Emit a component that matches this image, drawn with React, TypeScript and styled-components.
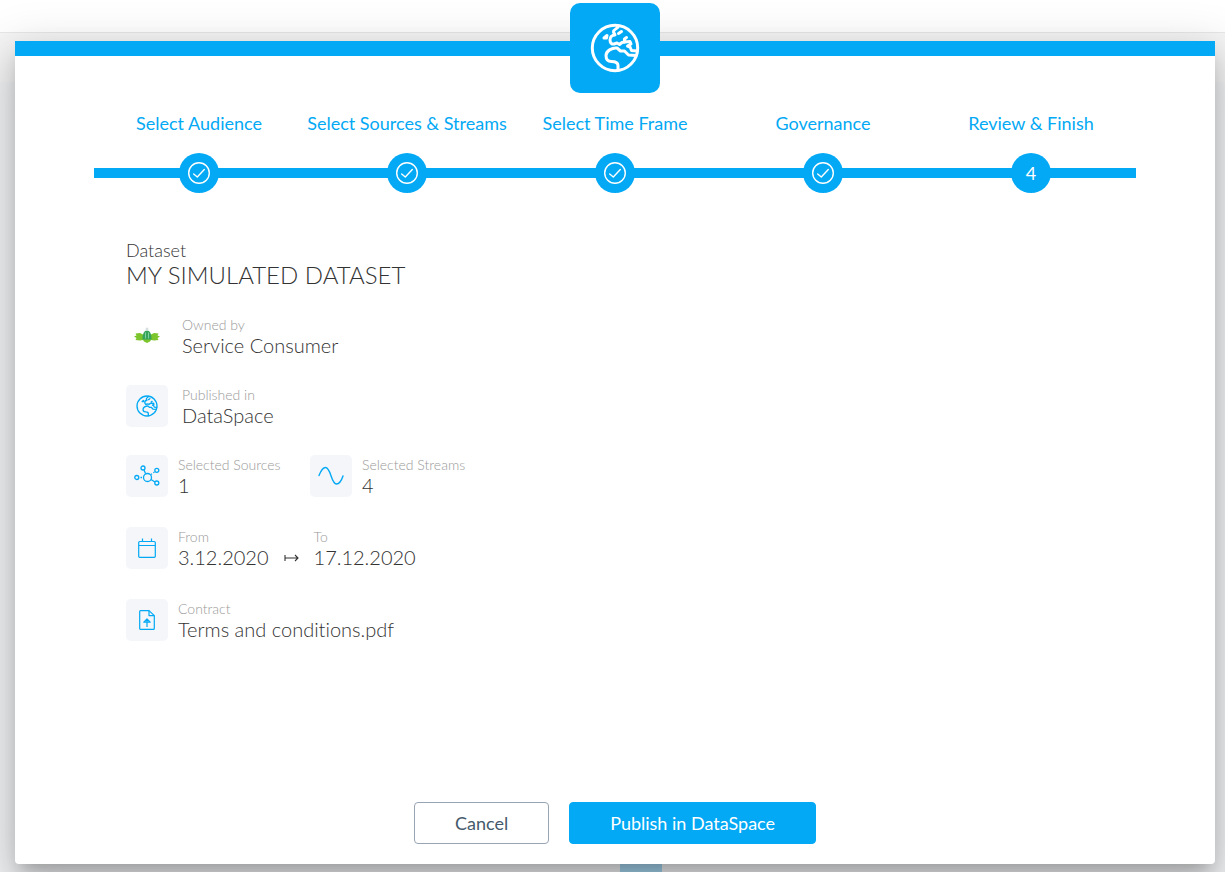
import React from "react";
import styled, { createGlobalStyle, css } from "styled-components";

const BLUE = "#03a9f4";

const GlobalStyle = createGlobalStyle`
  * { box-sizing: border-box; }
  html, body, #root { height: 100%; }
  body {
    margin: 0;
    background: #f2f4f6;
    color: #333333;
    font-family: Lato, "Liberation Sans", sans-serif;
    font-variant-ligatures: none;
  }
`;

const Page = styled.div`
  position: relative;
  min-height: 100%;
  overflow: hidden;
`;

const Backdrop = styled.div`
  position: absolute;
  inset: 0;
  display: flex;
  flex-direction: column;
`;

const PageHeader = styled.div`
  height: 33px;
  background: #ffffff;
  border-bottom: 1px solid #e8e8e8;
`;

const PageToolbar = styled.div`
  flex: 1;
  max-height: 49px;
  background: #f6f6f6;
`;

const PageTile = styled.div`
  width: 42px;
  height: 42px;
  margin: auto 0 0 620px;
  background: #a5d5f0;
`;

const DialogArea = styled.div`
  position: relative;
  min-height: 100vh;
  display: flex;
  padding: 41px 10px 8px 15px;
`;

const Dialog = styled.section`
  position: relative;
  flex: 1;
  display: flex;
  flex-direction: column;
  padding: 55px 79px 20px;
  border-top: 15px solid ${BLUE};
  border-radius: 0 0 4px 4px;
  background: #ffffff;
  box-shadow:
    0 11px 15px -7px rgba(0, 0, 0, 0.2),
    0 24px 38px 3px rgba(0, 0, 0, 0.14),
    0 9px 46px 8px rgba(0, 0, 0, 0.12);
`;

const Emblem = styled.div`
  position: absolute;
  top: -53px;
  left: 50%;
  transform: translateX(-50%);
  width: 90px;
  height: 90px;
  display: grid;
  place-items: center;
  border-radius: 10px;
  background: ${BLUE};
  color: #ffffff;
`;

const Steps = styled.ol`
  display: grid;
  grid-template-columns: repeat(5, 1fr);
  margin: 0;
  padding: 0 1px;
  list-style: none;
  background: linear-gradient(${BLUE}, ${BLUE}) 0 calc(100% - 15px) / 100% 10px no-repeat;
`;

const Step = styled.li`
  display: flex;
  flex-direction: column;
  align-items: center;
  gap: 18px;
  color: ${BLUE};
  font-size: 18px;
  line-height: 24px;
  white-space: nowrap;
`;

const StepDot = styled.span`
  width: 40px;
  height: 40px;
  display: grid;
  place-items: center;
  border-radius: 50%;
  background: ${BLUE};
  color: #ffffff;
`;

const Summary = styled.div`
  display: flex;
  flex-direction: column;
  gap: 28px;
  padding: 45px 32px 0;
`;

const Heading = styled.header`
  display: flex;
  flex-direction: column;
  font-weight: 300;
`;

const Kicker = styled.span`
  font-size: 18px;
  line-height: 24px;
`;

const Title = styled.h1`
  margin: 0;
  font-size: 24px;
  font-weight: 300;
  line-height: 25px;
`;

const Group = styled.div<{ $gap: number }>`
  display: flex;
  flex-direction: column;
  gap: ${(p) => p.$gap}px;
`;

const Row = styled.div`
  display: flex;
`;

const Item = styled.div<{ $gap: number; $width?: number }>`
  display: flex;
  gap: ${(p) => p.$gap}px;
  ${(p) => p.$width && css`width: ${p.$width}px;`}
`;

const Tile = styled.div<{ $plain?: boolean }>`
  flex: none;
  width: 42px;
  height: 42px;
  display: grid;
  place-items: center;
  border-radius: 5px;
  background: ${(p) => (p.$plain ? "transparent" : "#f4f6fa")};
  color: ${BLUE};
`;

const Field = styled.div`
  display: flex;
  flex-direction: column;
  font-weight: 300;
`;

const Label = styled.span`
  color: #999999;
  font-size: 14px;
  line-height: 20px;
`;

const Value = styled.span`
  font-size: 20px;
  line-height: 20px;
`;

const Arrow = styled.span`
  display: flex;
  align-items: flex-end;
  padding: 0 15px 5px;
`;

const Actions = styled.footer`
  display: flex;
  justify-content: center;
  gap: 20px;
  margin-top: auto;
`;

const Button = styled.button<{ $primary?: boolean }>`
  height: 42px;
  padding: 0 40px;
  border: 1px solid ${(p) => (p.$primary ? BLUE : "#98a4b3")};
  border-radius: 4px;
  background: ${(p) => (p.$primary ? BLUE : "#ffffff")};
  color: ${(p) => (p.$primary ? "#ffffff" : "#455a6b")};
  font: 400 18px/24px Lato, "Liberation Sans", sans-serif;
  cursor: pointer;
`;

const Globe = ({ size, stroke }: { size: number; stroke: number }) => (
  <svg width={size} height={size} viewBox="0 0 50 50" fill="none" stroke="currentColor" strokeWidth={stroke} strokeLinecap="round" strokeLinejoin="round" aria-hidden="true">
    <circle cx="25" cy="25" r="22.700" />
    <path d="M28.500 3C28 6 23.500 5.500 23.500 9L25 12C22 12 20 14 20 17C20 20 22 21.500 24 21L27 20L29.500 21.500L32 19.500L34.500 19L34.500 16L36.500 14.500" />
    <path d="M31.500 8.500L28.500 10.500M34.500 19L40 18.500L41 21L37.500 23L40 24L41.500 27.500L47 28" />
    <path d="M46 32.500L38.500 32L34.500 28L30.500 28L27 25C22 24.500 16 28 16 32.500C16 37 18.500 38.500 21.500 38.500C25 38.500 28 39.500 28 42.500V47" />
    <path d="M14 15L17 12.500L16.500 15Z" fill="currentColor" />
  </svg>
);

const Check = () => (
  <svg width="24" height="24" viewBox="0 0 24 24" fill="none" stroke="currentColor" strokeWidth="1.400" strokeLinecap="round" strokeLinejoin="round" aria-hidden="true">
    <circle cx="12" cy="12" r="10.300" />
    <path d="M6.700 13L10.300 16L17.300 8.500" />
  </svg>
);

const Leaf = () => (
  <svg width="26" height="18" viewBox="0 0 26 18" aria-hidden="true">
    <path d="M0 9.500L2.500 8.500L1.500 6.500L6 6L9 7.500H17L20 6L24.500 6.500L23.500 8.500L26 9.500L23.500 11L24.500 13L20 13.500L17 13L16 14.500L13 16L10 14.500L9 13L6 13.500L1.500 13L2.500 11Z" fill="#7cc52c" />
    <path d="M8.500 12.500Q8.500 3.500 13 3.500Q17.500 3.500 17.500 12.500Z" fill="#36a35a" />
    <path d="M11.500 5.500V11.500M14.500 5.500V11.500" stroke="#7fd0a0" />
    <circle cx="13" cy="2" r="1.500" fill="#d7dfe0" />
  </svg>
);

const Sources = () => (
  <svg width="26" height="22" viewBox="0 0 26 22" fill="none" stroke="currentColor" strokeWidth="1.300" aria-hidden="true">
    <circle cx="13.500" cy="12.500" r="4" />
    <circle cx="2.800" cy="12.500" r="2" />
    <circle cx="9" cy="3" r="2" />
    <circle cx="22.800" cy="5.300" r="2" />
    <circle cx="22.800" cy="18" r="2" />
    <path d="M6.500 12.500H8M10 5L11.500 8.500M17 9.500L18 8.700M19.300 7.700L20.500 7M17 14.500L21 17" />
  </svg>
);

const Wave = () => (
  <svg width="26" height="20" viewBox="0 0 26 20" fill="none" stroke="currentColor" strokeWidth="1.400" strokeLinecap="round" aria-hidden="true">
    <path d="M1 9.500C3 4.500 5 1.500 7.500 1.500C13 1.500 13 18 18.500 18C21 18 23.500 14.500 25 10" />
  </svg>
);

const Calendar = () => (
  <svg width="18" height="20" viewBox="0 0 18 20" fill="none" stroke="currentColor" strokeWidth="1.200" aria-hidden="true">
    <rect x="0.700" y="3.500" width="16.600" height="15.800" rx="1" />
    <path d="M1 7.500H17M4.500 0.500V3.500M13.500 0.500V3.500" />
  </svg>
);

const UploadFile = () => (
  <svg width="16" height="20" viewBox="0 0 16 20" fill="none" stroke="currentColor" strokeWidth="1.200" strokeLinejoin="round" aria-hidden="true">
    <path d="M1.500 0.600H10L15.300 5.600V18.500Q15.300 19.400 14.500 19.400H1.500Q0.700 19.400 0.700 18.500V1.500Q0.700 0.600 1.500 0.600Z" />
    <path d="M10 0.600V5.600H15.300M8 17V9M4.800 12.200L8 9L11.200 12.200Z" />
  </svg>
);

const MapsTo = () => (
  <svg width="15" height="12" viewBox="0 0 15 12" fill="none" stroke="currentColor" strokeWidth="1.100" aria-hidden="true">
    <path d="M1 3V9M1 6H14M11 3L14 6L11 9" />
  </svg>
);

const steps = ["Select Audience", "Select Sources & Streams", "Select Time Frame", "Governance", "Review & Finish"];

const Info = ({ label, value }: { label: string; value: string }) => (
  <Field>
    <Label>{label}</Label>
    <Value>{value}</Value>
  </Field>
);

export default function App() {
  return (
    <Page>
      <GlobalStyle />
      <Backdrop>
        <PageHeader />
        <PageToolbar />
        <PageTile />
      </Backdrop>
      <DialogArea>
        <Dialog role="dialog" aria-labelledby="dataset-title">
          <Emblem><Globe size={50} stroke={3} /></Emblem>
          <Steps>
            {steps.map((name, i) => (
              <Step key={name}>
                {name}
                <StepDot>{i < 4 ? <Check /> : "4"}</StepDot>
              </Step>
            ))}
          </Steps>
          <Summary>
            <Heading>
              <Kicker>Dataset</Kicker>
              <Title id="dataset-title">MY SIMULATED DATASET</Title>
            </Heading>
            <Group $gap={28}>
              <Item $gap={14}>
                <Tile $plain><Leaf /></Tile>
                <Info label="Owned by" value="Service Consumer" />
              </Item>
              <Item $gap={14}>
                <Tile><Globe size={22} stroke={3} /></Tile>
                <Info label="Published in" value="DataSpace" />
              </Item>
            </Group>
            <Group $gap={30}>
              <Row>
                <Item $gap={10} $width={184}>
                  <Tile><Sources /></Tile>
                  <Info label="Selected Sources" value="1" />
                </Item>
                <Item $gap={10}>
                  <Tile><Wave /></Tile>
                  <Info label="Selected Streams" value="4" />
                </Item>
              </Row>
              <Row>
                <Item $gap={10}>
                  <Tile><Calendar /></Tile>
                  <Info label="From" value="3.12.2020" />
                </Item>
                <Arrow><MapsTo /></Arrow>
                <Info label="To" value="17.12.2020" />
              </Row>
              <Item $gap={10}>
                <Tile><UploadFile /></Tile>
                <Info label="Contract" value="Terms and conditions.pdf" />
              </Item>
            </Group>
          </Summary>
          <Actions>
            <Button type="button">Cancel</Button>
            <Button type="button" $primary>Publish in DataSpace</Button>
          </Actions>
        </Dialog>
      </DialogArea>
    </Page>
  );
}
